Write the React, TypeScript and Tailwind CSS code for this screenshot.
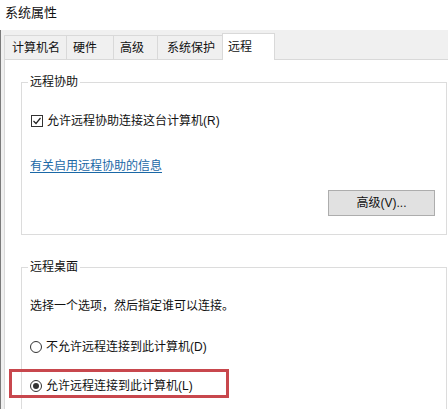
const tabs = [
  { label: "计算机名", w: "w-[62px]", pl: "pl-[7px]" },
  { label: "硬件", w: "w-[47px]", pl: "pl-[6px]" },
  { label: "高级", w: "w-[44px]", pl: "pl-[6px]" },
  { label: "系统保护", w: "w-[65px]", pl: "pl-[9px]" },
];

function Checkbox() {
  return (
    <span className="ml-[1px] w-[12px] h-[12px] border border-[#333] bg-white flex items-center justify-center">
      <svg width="10" height="10" viewBox="0 0 10 10">
        <polyline points="1.5,5 4,7.5 8.5,2" fill="none" stroke="#222" strokeWidth="1.2" />
      </svg>
    </span>
  );
}

function Radio({ checked }: { checked?: boolean }) {
  return (
    <span className="w-[12px] h-[12px] rounded-full border border-[#333] bg-white flex items-center justify-center">
      {checked && <span className="w-[6px] h-[6px] rounded-full bg-[#333]" />}
    </span>
  );
}

export default function App() {
  return (
    <div className="relative w-[448px] h-[409px] overflow-hidden bg-white text-[12px] leading-[16px] text-[#111] font-['Liberation_Sans','Noto_Sans_CJK_SC',sans-serif]">
      {/* Title bar */}
      <div className="h-[30px] pt-[5px] pl-[5px] text-[13px]">系统属性</div>

      {/* Body */}
      <div className="w-[480px] h-[379px] bg-[#f0f0f0] border-l border-[#7a7a7a] pl-[3px] pt-[3px]">
        {/* Tabs */}
        <div className="h-[26px] flex items-end">
          {tabs.map((t) => (
            <div
              key={t.label}
              className={`${t.w} ${t.pl} h-[24px] flex items-center border-l border-t border-[#d9d9d9] bg-[#f0f0f0]`}
            >
              {t.label}
            </div>
          ))}
          <div className="relative z-10 w-[53px] h-[27px] -mb-px pl-[5px] flex items-center border-l border-t border-r border-[#d9d9d9] bg-white">
            远程
          </div>
        </div>

        {/* Panel */}
        <div className="h-[400px] bg-white border-l border-t border-[#d9d9d9] pt-[14px]">
          <fieldset className="ml-[16px] w-[426px] border border-[#dcdcdc] pl-[8px] pr-[11px] pb-[18px]">
            <legend className="-ml-[2px] px-[2px] leading-[16px]">远程协助</legend>
            <div className="mt-[23px] h-[16px] flex items-center gap-[4px]">
              <Checkbox />
              <span>允许远程协助连接这台计算机(R)</span>
            </div>
            <div className="mt-[29px]">
              <a className="text-[#1a68a6] underline underline-offset-2 decoration-[#1a68a6]">
                有关启用远程协助的信息
              </a>
            </div>
            <div className="mt-[16px] flex justify-end">
              <button className="w-[107px] h-[26px] bg-[#e1e1e1] border border-[#adadad] text-[#111]">
                高级(V)...
              </button>
            </div>
          </fieldset>

          <fieldset className="mt-[24px] ml-[16px] w-[426px] border border-[#dcdcdc] pl-[8px] pb-[40px]">
            <legend className="-ml-[2px] px-[2px] leading-[16px]">远程桌面</legend>
            <div className="mt-[23px]">选择一个选项，然后指定谁可以连接。</div>
            <div className="mt-[25px] h-[16px] flex items-center gap-[4px]">
              <Radio />
              <span>不允许远程连接到此计算机(D)</span>
            </div>
            <div className="mt-[23px] h-[16px] flex items-center gap-[4px]">
              <Radio checked />
              <span>允许远程连接到此计算机(L)</span>
            </div>
          </fieldset>
        </div>
      </div>

      {/* Red annotation box */}
      <div className="absolute left-[9px] top-[369px] w-[220px] h-[29px] border-[3px] border-[#c8474d]" />
    </div>
  );
}
